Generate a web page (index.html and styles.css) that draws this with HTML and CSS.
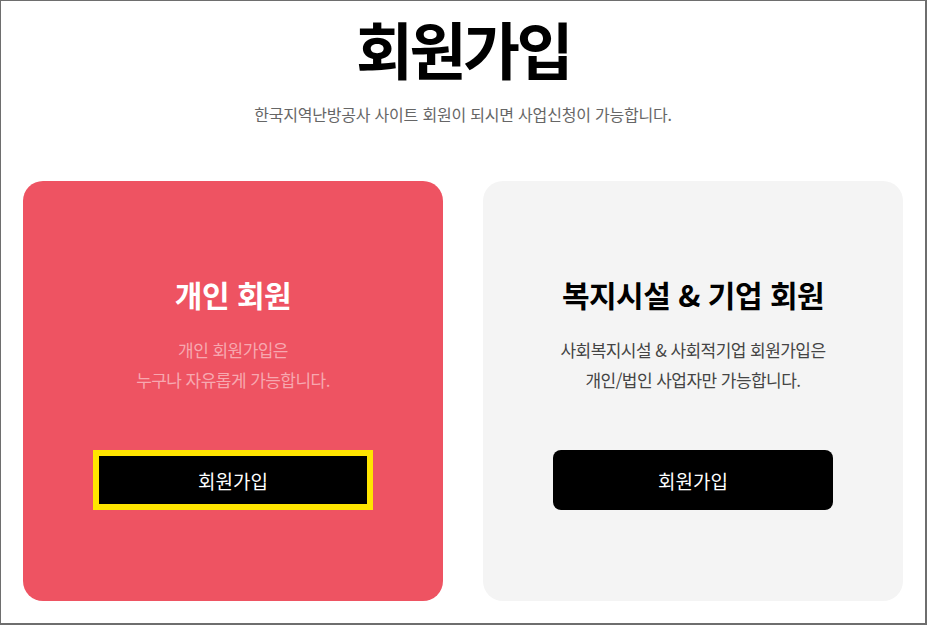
FILE: index.html
```html
<!DOCTYPE html>
<html lang="ko">
<head>
<meta charset="utf-8">
<title>회원가입</title>
<link rel="stylesheet" href="styles.css">
</head>
<body>
<div class="page">
  <h1 class="title">회원가입</h1>
  <p class="subtitle">한국지역난방공사 사이트 회원이 되시면 사업신청이 가능합니다.</p>
  <div class="cards">
    <div class="card card-personal">
      <h2 class="card-title">개인 회원</h2>
      <p class="card-desc">개인 회원가입은<br>누구나 자유롭게 가능합니다.</p>
      <a class="btn btn-focus" href="#">회원가입</a>
    </div>
    <div class="card card-corp">
      <h2 class="card-title">복지시설 &amp; 기업 회원</h2>
      <p class="card-desc">사회복지시설 &amp; 사회적기업 회원가입은<br>개인/법인 사업자만 가능합니다.</p>
      <a class="btn" href="#">회원가입</a>
    </div>
  </div>
</div>
</body>
</html>
```

FILE: styles.css
```css
html, body {
  margin: 0;
  padding: 0;
  background: #ffffff;
}
body {
  font-family: "Noto Sans CJK KR", "Noto Sans", sans-serif;
  color: #000;
}
.page {
  width: 927px;
  height: 625px;
  box-sizing: border-box;
  border: 2px solid #6e6e6e;
  border-top-width: 1px;
  border-left-width: 1px;
  display: flex;
  flex-direction: column;
  align-items: center;
  overflow: hidden;
}
.title {
  margin: 10px 0 0;
  font-size: 62px;
  font-weight: 700;
  line-height: 74px;
  letter-spacing: -3.5px;
}
.subtitle {
  margin: 17px 0 0;
  font-size: 16px;
  line-height: 24px;
  color: #666;
  letter-spacing: -0.2px;
}
.cards {
  display: flex;
  gap: 40px;
  margin-top: 55px;
}
.card {
  width: 420px;
  height: 420px;
  box-sizing: border-box;
  border-radius: 20px;
  padding-top: 93px;
  display: flex;
  flex-direction: column;
  align-items: center;
  text-align: center;
}
.card-personal {
  background: #ee5362;
  color: #fff;
}
.card-corp {
  background: #f4f4f4;
  color: #000;
}
.card-title {
  margin: 0;
  font-size: 30px;
  font-weight: 700;
  line-height: 40px;
  letter-spacing: -0.5px;
}
.card-desc {
  margin: 21px 0 0;
  font-size: 17px;
  line-height: 30px;
  letter-spacing: -0.55px;
}
.card-personal .card-desc {
  color: #f7a8b0;
}
.card-corp .card-desc {
  color: #444;
}
.btn {
  margin-top: 55px;
  width: 280px;
  height: 60px;
  box-sizing: border-box;
  background: #000;
  color: #fff;
  border-radius: 8px;
  display: flex;
  align-items: center;
  justify-content: center;
  font-size: 19px;
  letter-spacing: 0;
  text-decoration: none;
}
.btn-focus {
  border: 6px solid #ffe500;
  border-radius: 0;
}
```
